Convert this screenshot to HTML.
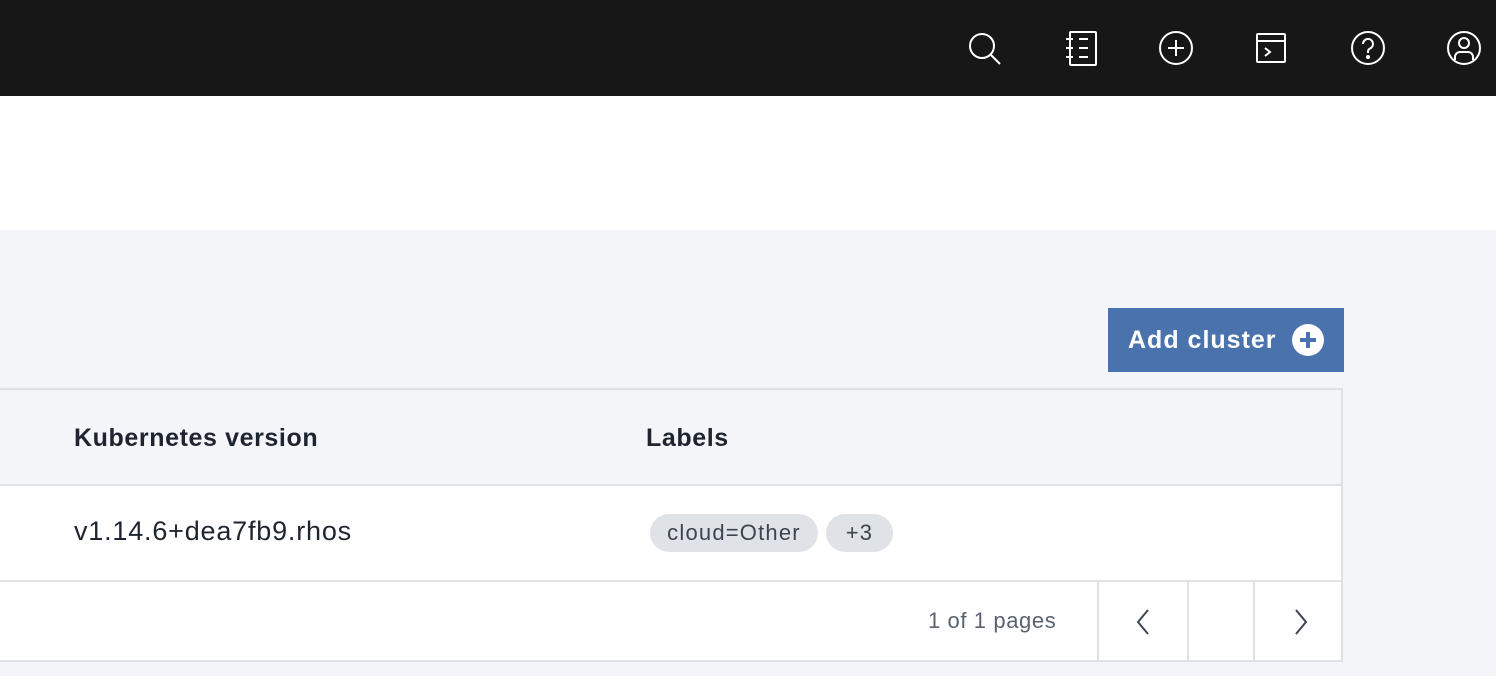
<!DOCTYPE html><html><head><style>
*{margin:0;padding:0;box-sizing:border-box}
body{width:1496px;height:676px;overflow:hidden;background:#f4f5f9;font-family:"Liberation Sans",sans-serif;position:relative}
.top{position:absolute;left:0;top:0;width:1496px;height:96px;background:#171717}
.white{position:absolute;left:0;top:96px;width:1496px;height:134px;background:#fff}
.ic{position:absolute;top:30px;width:36px;height:36px}
.btn{position:absolute;left:1108px;top:308px;width:236px;height:64px;background:#4a72ad;color:#fff;font-size:25px;font-weight:bold;line-height:64px;padding-left:20px;letter-spacing:1px}
.tbl{position:absolute;left:-2px;top:388px;width:1345px;height:274px;border:2px solid #dfe1e6}
.hd{position:absolute;left:0;top:0;width:100%;height:96px;background:#f4f5f9;border-bottom:2px solid #dfe1e6}
.row{position:absolute;left:0;top:96px;width:100%;height:96px;background:#fff;border-bottom:2px solid #dfe1e6}
.pg{position:absolute;left:0;top:192px;width:100%;height:78px;background:#fff}
.t{position:absolute;font-size:24px;color:#1f2530}
.tag{position:absolute;top:28px;height:38px;border-radius:19px;background:#dfe2e6;font-size:22px;color:#3d4550;line-height:38px;text-align:center;letter-spacing:1.2px}
.v{position:absolute;top:0;width:2px;height:78px;background:#dfe1e6}
</style></head><body>
<div class="top">
<svg class="ic" style="left:966px" viewBox="0 0 36 36" fill="none" stroke="#fff" stroke-width="2"><circle cx="16" cy="16" r="12"/><line x1="25" y1="25" x2="34" y2="34"/></svg>
<svg class="ic" style="left:1062px" viewBox="0 0 36 36" fill="none" stroke="#fff" stroke-width="2"><rect x="8" y="2" width="26" height="33" rx="1"/><line x1="4" y1="9" x2="11" y2="9"/><line x1="4" y1="18" x2="11" y2="18"/><line x1="4" y1="27" x2="11" y2="27"/><line x1="17" y1="9" x2="26" y2="9"/><line x1="17" y1="18" x2="26" y2="18"/><line x1="17" y1="27" x2="26" y2="27"/></svg>
<svg class="ic" style="left:1158px" viewBox="0 0 36 36" fill="none" stroke="#fff" stroke-width="2"><circle cx="18" cy="18" r="16"/><line x1="18" y1="10" x2="18" y2="26"/><line x1="10" y1="18" x2="26" y2="18"/></svg>
<svg class="ic" style="left:1254px" viewBox="0 0 36 36" fill="none" stroke="#fff" stroke-width="2"><rect x="3" y="4" width="28" height="28" rx="1"/><line x1="3" y1="11" x2="31" y2="11"/><polyline points="11,18 16,22 11,26"/></svg>
<svg class="ic" style="left:1350px" viewBox="0 0 36 36" fill="none" stroke="#fff" stroke-width="2"><circle cx="18" cy="18" r="16"/><path d="M13 14a5 5 0 1 1 7 4.5c-1.5.8-2 1.5-2 3v1.5"/><circle cx="18" cy="27" r="1" fill="#fff"/></svg>
<svg class="ic" style="left:1446px" viewBox="0 0 36 36" fill="none" stroke="#fff" stroke-width="2"><circle cx="18" cy="18" r="16"/><circle cx="18" cy="13" r="5"/><path d="M9 30v-3a5 5 0 0 1 5-5h8a5 5 0 0 1 5 5v3"/></svg>
</div>
<div class="white"></div>
<div class="btn">Add cluster<svg style="position:absolute;left:184px;top:16px" width="32" height="32" viewBox="0 0 32 32"><circle cx="16" cy="16" r="16" fill="#fff"/><rect x="14" y="8" width="4" height="16" fill="#4a72ad"/><rect x="8" y="14" width="16" height="4" fill="#4a72ad"/></svg></div>
<div class="tbl">
<div class="hd"><div class="t" style="left:74px;top:34px;font-weight:bold;font-size:25px;letter-spacing:0.6px">Kubernetes version</div><div class="t" style="left:646px;top:34px;font-weight:bold;font-size:25px;letter-spacing:0.6px">Labels</div></div>
<div class="row"><div class="t" style="left:74px;top:30px;font-size:27px;letter-spacing:0.8px">v1.14.6+dea7fb9.rhos</div>
<div class="tag" style="left:650px;width:168px">cloud=Other</div><div class="tag" style="left:826px;width:67px">+3</div></div>
<div class="pg"><div class="t" style="left:928px;top:26px;font-size:22px;color:#5a6270;letter-spacing:0.6px">1 of 1 pages</div>
<div class="v" style="left:1097px"></div><div class="v" style="left:1187px"></div><div class="v" style="left:1253px"></div>
<svg style="position:absolute;left:1134px;top:26px" width="20" height="28" viewBox="0 0 20 28" fill="none" stroke="#3d4550" stroke-width="2"><polyline points="14,2 4,14 14,26"/></svg>
<svg style="position:absolute;left:1290px;top:26px" width="20" height="28" viewBox="0 0 20 28" fill="none" stroke="#3d4550" stroke-width="2"><polyline points="6,2 16,14 6,26"/></svg>
</div></div>
</body></html>
